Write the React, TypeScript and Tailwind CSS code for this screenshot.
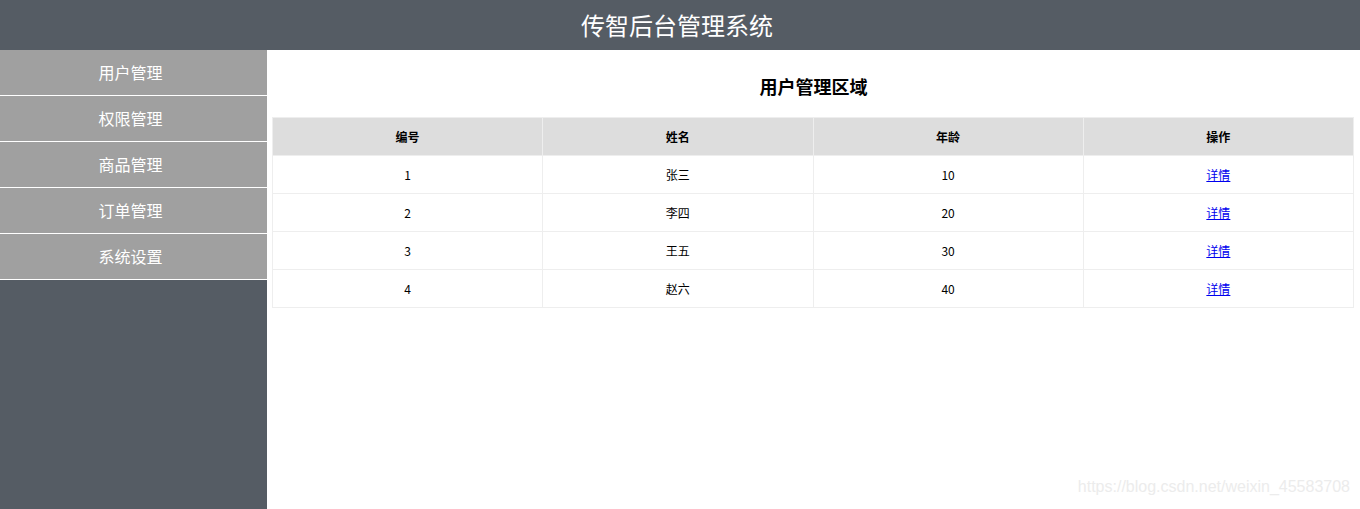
import React from 'react'

const menus = ['用户管理', '权限管理', '商品管理', '订单管理', '系统设置']

const users = [
  { id: 1, name: '张三', age: 10 },
  { id: 2, name: '李四', age: 20 },
  { id: 3, name: '王五', age: 30 },
  { id: 4, name: '赵六', age: 40 },
]

const font = { fontFamily: '"Microsoft YaHei", "Noto Sans CJK SC", "Noto Sans", sans-serif' }

export default function App() {
  return (
    <div className="relative flex h-[509px] w-[1360px] flex-col overflow-hidden bg-white" style={font}>
      <header className="flex h-[50px] shrink-0 items-center justify-center bg-[#555c64] pr-[6px] text-[24px] text-white">
        传智后台管理系统
      </header>

      <div className="flex flex-1">
        <aside className="w-[267px] shrink-0 bg-[#555c64]">
          {menus.map((menu) => (
            <div
              key={menu}
              className="flex h-[46px] items-center justify-center border-b border-white bg-[#a0a0a0] pr-[6px] pb-px text-[16px] text-white"
            >
              {menu}
            </div>
          ))}
        </aside>

        <main className="flex-1">
          <h3 className="flex h-[67px] items-end justify-center pb-[17px] text-[18px] font-bold text-black">
            用户管理区域
          </h3>
          <table className="ml-[5px] w-[1082px] table-fixed border-collapse border border-[#eeeeee] text-center text-[12px] text-black">
            <thead>
              <tr className="h-[38px] bg-[#dddddd]">
                <th className="border border-[#eeeeee] font-bold">编号</th>
                <th className="border border-[#eeeeee] font-bold">姓名</th>
                <th className="border border-[#eeeeee] font-bold">年龄</th>
                <th className="border border-[#eeeeee] font-bold">操作</th>
              </tr>
            </thead>
            <tbody>
              {users.map((user) => (
                <tr key={user.id} className="h-[38px]">
                  <td className="border border-[#eeeeee]">{user.id}</td>
                  <td className="border border-[#eeeeee]">{user.name}</td>
                  <td className="border border-[#eeeeee]">{user.age}</td>
                  <td className="border border-[#eeeeee]">
                    <a href="#" className="text-[#0000ee] underline">详情</a>
                  </td>
                </tr>
              ))}
            </tbody>
          </table>
        </main>
      </div>

      <div
        className="absolute bottom-[10px] right-[10px] text-[16px] text-[#ececec]"
        style={{ fontFamily: '"Liberation Sans", Arial, sans-serif' }}
      >
        https://blog.csdn.net/weixin_45583708
      </div>
    </div>
  )
}
